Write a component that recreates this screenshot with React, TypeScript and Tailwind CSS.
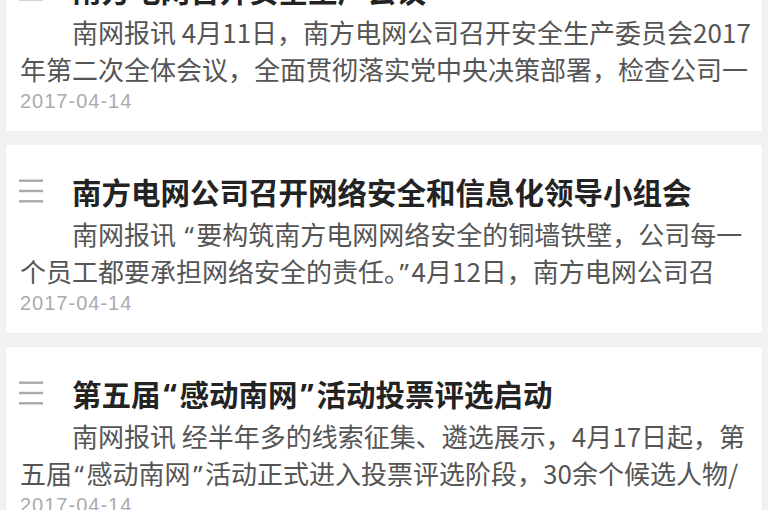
import React from "react";

type Item = { title: string; lines: [string, string]; date: string };

const items: Item[] = [
  {
    title: "南方电网召开安全生产会议",
    lines: [
      "南网报讯 4月11日，南方电网公司召开安全生产委员会2017",
      "年第二次全体会议，全面贯彻落实党中央决策部署，检查公司一",
    ],
    date: "2017-04-14",
  },
  {
    title: "南方电网公司召开网络安全和信息化领导小组会",
    lines: [
      "南网报讯 “要构筑南方电网网络安全的铜墙铁壁，公司每一",
      "个员工都要承担网络安全的责任。”4月12日，南方电网公司召",
    ],
    date: "2017-04-14",
  },
  {
    title: "第五届“感动南网”活动投票评选启动",
    lines: [
      "南网报讯 经半年多的线索征集、遴选展示，4月17日起，第",
      "五届“感动南网”活动正式进入投票评选阶段，30余个候选人物/",
    ],
    date: "2017-04-14",
  },
];

function Txt({ s }: { s: string }) {
  const parts = s.split(/([“”])/);
  return (
    <>
      {parts.map((p, i) =>
        p === "“" || p === "”" ? (
          <span key={i} className="font-['Noto_Sans',sans-serif] mx-[0.1em] leading-none">
            {p}
          </span>
        ) : (
          <React.Fragment key={i}>{p}</React.Fragment>
        )
      )}
    </>
  );
}

function MenuIcon() {
  return (
    <svg width="24" height="24" viewBox="0 0 24 24" className="shrink-0">
      <rect x="0" y="0.5" width="24" height="2.4" fill="#a9a9ab" />
      <rect x="0" y="10.8" width="24" height="2.4" fill="#a9a9ab" />
      <rect x="0" y="21.1" width="24" height="2.4" fill="#a9a9ab" />
    </svg>
  );
}

function Card({ item }: { item: Item }) {
  return (
    <div className="bg-white rounded-[3px] h-[188px] pt-[25px] pl-[13px] pr-[6px] shrink-0 shadow-[0_0_2px_rgba(0,0,0,0.03)]">
      <div className="flex items-center h-[42px]">
        <MenuIcon />
        <div className="ml-[29px] text-[29.5px] leading-[42px] font-bold text-[#232323] whitespace-nowrap">
          <Txt s={item.title} />
        </div>
      </div>
      <div className="mt-[3px] pl-[1px] text-[26px] leading-[37px] text-[#555555] whitespace-nowrap">
        <div className="pl-[52px] h-[37px]">
          <Txt s={item.lines[0]} />
        </div>
        <div className="h-[37px]">
          <Txt s={item.lines[1]} />
        </div>
      </div>
      <div className="mt-[1px] pl-[1px] text-[20px] leading-[26px] tracking-[1px] text-[#ababab] font-['Liberation_Sans',sans-serif]">
        {item.date}
      </div>
    </div>
  );
}

export default function App() {
  return (
    <div className="w-[768px] h-[510px] overflow-hidden bg-[#f2f2f4] font-['Noto_Sans_CJK_SC',sans-serif]">
      <div className="flex flex-col gap-[14px] px-[6px] -mt-[57px]">
        {items.map((it, i) => (
          <Card key={i} item={it} />
        ))}
      </div>
    </div>
  );
}
